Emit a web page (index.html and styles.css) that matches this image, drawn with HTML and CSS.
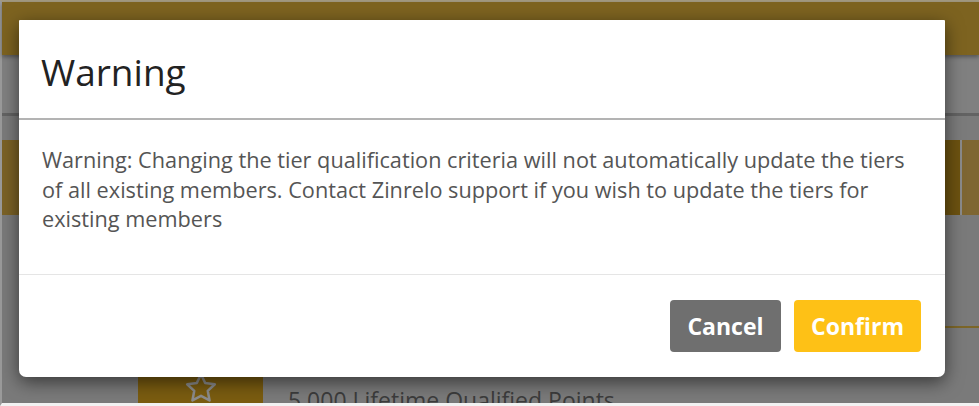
FILE: index.html
```html
<!DOCTYPE html>
<html lang="en">
<head>
<meta charset="utf-8">
<title>Warning</title>
<link rel="stylesheet" href="styles.css">
</head>
<body>
<div class="page">
  <div class="topbar"></div>
  <div class="subbar"></div>
  <div class="gap"></div>
  <div class="band">
    <div class="band-main"></div>
    <div class="band-col a"></div>
    <div class="band-col b"></div>
  </div>
  <div class="lower">
    <div class="rule-row"><div class="rule"></div></div>
    <div class="tier-row">
      <div class="tier-icon">
        <svg width="36" height="36" viewBox="0 0 24 24" fill="none" stroke="#8c8c8c" stroke-width="1.7" stroke-linejoin="round"><path d="M12 2.8l2.8 5.9 6.4.8-4.7 4.4 1.2 6.4L12 17.2l-5.7 3.1 1.2-6.4-4.7-4.4 6.4-.8z"/></svg>
      </div>
      <div class="tier-text">5,000 Lifetime Qualified Points</div>
    </div>
  </div>
</div>
<div class="modal">
  <div class="modal-header"><h4 class="modal-title">Warning</h4></div>
  <div class="modal-body">
    <p>Warning: Changing the tier qualification criteria will not automatically update the tiers of all existing members. Contact Zinrelo support if you wish to update the tiers for existing members</p>
  </div>
  <div class="modal-footer">
    <button class="btn btn-cancel">Cancel</button>
    <button class="btn btn-confirm">Confirm</button>
  </div>
</div>
</body>
</html>
```
FILE: styles.css
```css
html, body {
  margin: 0;
  padding: 0;
}
body {
  width: 979px;
  height: 406px;
  overflow: hidden;
  position: relative;
  background: #7a7a7a;
  font-family: "Open Sans", "Liberation Sans", sans-serif;
}
.page {
  height: 406px;
  box-sizing: border-box;
  border-top: 2px solid #a39a80;
  border-left: 2px solid #9a9a9a;
  border-bottom: 3px solid #f2f2f2;
  display: flex;
  flex-direction: column;
}
.page > * {
  flex-shrink: 0;
}
.topbar {
  height: 53px;
  background: #7d6320;
  box-shadow: 0 2px 4px rgba(0,0,0,0.35);
  position: relative;
  z-index: 1;
}
.subbar {
  height: 58px;
  background: #808080;
  border-bottom: 3px solid #636363;
}
.gap {
  height: 24px;
  background: #7b7b7b;
}
.band {
  height: 75px;
  display: flex;
}
.band-main {
  flex: 1;
  background: #7b6226;
}
.band-col.a {
  width: 16px;
  background: #6c5210;
  border-right: 2px solid #8a8a8a;
}
.band-col.b {
  width: 17px;
  background: #7e6632;
}
.lower {
  flex: 1 1 auto;
  min-height: 0;
  overflow: hidden;
  background: #7a7a7a;
  display: flex;
  flex-direction: column;
}
.rule-row {
  height: 113px;
  flex-shrink: 0;
  display: flex;
  flex-direction: column;
  justify-content: flex-end;
  align-items: flex-end;
}
.rule {
  width: 120px;
  height: 2px;
  background: #7c6628;
}
.tier-row {
  flex-shrink: 0;
  display: flex;
  align-items: flex-start;
  padding-left: 136px;
  padding-top: 32px;
}
.tier-icon {
  width: 125px;
  height: 60px;
  background: #7a5c10;
  display: flex;
  justify-content: center;
  align-items: flex-start;
}
.tier-icon svg {
  margin-top: 10px;
}
.tier-text {
  margin-left: 25px;
  margin-top: 25px;
  font-size: 23px;
  line-height: 31px;
  color: #3c3c3c;
  white-space: nowrap;
}
.modal {
  position: absolute;
  left: 19px;
  top: 20px;
  width: 926px;
  height: 357px;
  background: #fff;
  border-radius: 1px 1px 7px 7px;
  box-shadow: 0 5px 18px rgba(0,0,0,0.55);
  display: flex;
  flex-direction: column;
  z-index: 5;
}
.modal-header {
  height: 98px;
  border-bottom: 2px solid #b3b3b3;
  padding: 0 22px;
  display: flex;
  align-items: center;
}
.modal-title {
  margin: 0;
  font-size: 37px;
  font-weight: 400;
  color: #222;
  line-height: 1.2;
  padding-top: 7px;
}
.modal-body {
  height: 155px;
  border-bottom: 1px solid #e5e5e5;
  padding: 0 23px;
  box-sizing: border-box;
}
.modal-body p {
  margin: 0;
  padding-top: 25px;
  font-size: 21.7px;
  line-height: 29.5px;
  color: #555;
}
.modal-footer {
  flex: 1;
  display: flex;
  justify-content: flex-end;
  align-items: center;
  gap: 13px;
  padding: 0 24px;
}
.btn {
  height: 52px;
  border: none;
  border-radius: 4px;
  font-family: "Open Sans", "Liberation Sans", sans-serif;
  font-size: 23px;
  font-weight: 700;
  color: #fff;
  padding: 0;
}
.btn-cancel {
  width: 111px;
  background: #6f6f6f;
}
.btn-confirm {
  width: 127px;
  background: #fec116;
}
```
